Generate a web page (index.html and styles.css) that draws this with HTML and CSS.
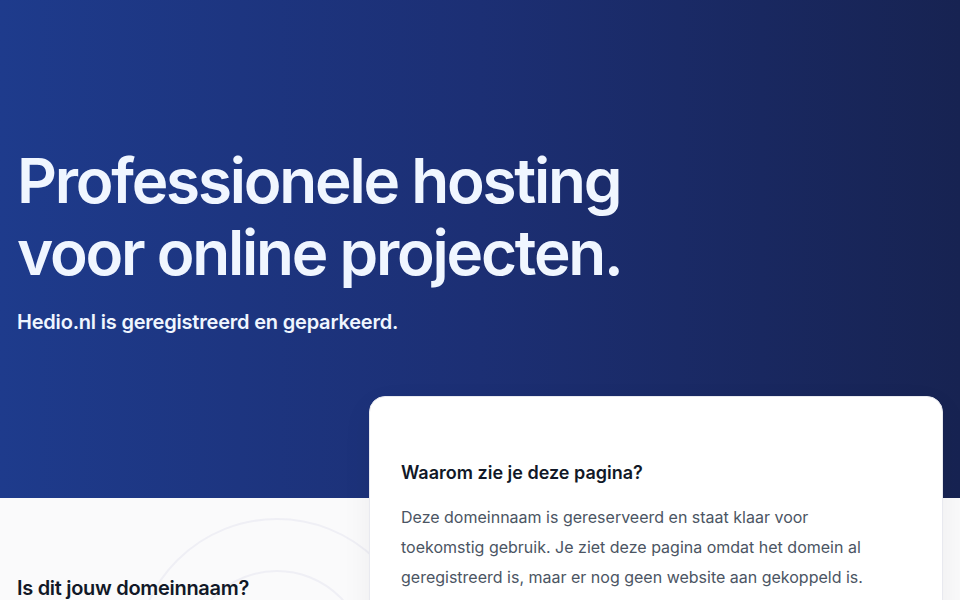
FILE: index.html
```html
<!DOCTYPE html>
<html lang="nl">
<head>
<meta charset="utf-8">
<title>Hedio.nl</title>
<link rel="stylesheet" href="styles.css">
</head>
<body>
<header class="hero">
  <div class="container">
    <h1 class="hero-title">Professionele hosting<br>voor online projecten.</h1>
    <p class="hero-sub">Hedio.nl is geregistreerd en geparkeerd.</p>
  </div>
</header>
<main class="content">
  <div class="rings" aria-hidden="true">
    <span class="ring ring-outer"></span>
    <span class="ring ring-inner"></span>
  </div>
  <div class="container grid">
    <section class="owner">
      <h2 class="owner-title">Is dit jouw domeinnaam?</h2>
    </section>
    <article class="card">
      <h2 class="card-title">Waarom zie je deze pagina?</h2>
      <p class="card-text">Deze domeinnaam is gereserveerd en staat klaar voor toekomstig gebruik. Je ziet deze pagina omdat het domein al geregistreerd is, maar er nog geen website aan gekoppeld is. Een moment van deze situatie is heel gebruikelijk bij nieuwe domeinen.</p>
    </article>
  </div>
</main>
</body>
</html>
```

FILE: styles.css
```css
* { box-sizing: border-box; }
html, body { margin: 0; padding: 0; }
body {
  font-family: Inter, "Noto Sans", sans-serif;
  background: #fafafb;
  color: #111827;
  overflow: hidden;
  height: 600px;
}
.container {
  padding: 0 17px;
}
.hero {
  background: linear-gradient(90deg, #1e3b8c 0%, #1c2f74 50%, #172352 100%);
  padding: 145px 0 161px;
  color: #f0f6ff;
}
.hero-title {
  margin: 0;
  font-size: 62px;
  line-height: 72px;
  font-weight: 600;
  letter-spacing: -0.036em;
}
.hero-sub {
  margin: 18px 0 0;
  font-size: 20px;
  line-height: 30px;
  font-weight: 600;
  letter-spacing: -0.01em;
}
.content {
  position: relative;
}
.rings {
  position: absolute;
  left: 0; top: 0; right: 0; bottom: 0;
  z-index: 0;
}
.ring {
  position: absolute;
  border: 2px solid #efeff5;
  border-radius: 50%;
}
.ring-outer { left: 135px; top: 20px; width: 284px; height: 284px; }
.ring-inner { left: 187px; top: 72px; width: 180px; height: 180px; }
.grid {
  position: relative;
  z-index: 1;
  display: grid;
  grid-template-columns: 1fr 574px;
  gap: 20px;
  align-items: start;
}
.owner {
  padding-top: 76px;
}
.owner-title {
  margin: 0;
  font-size: 20px;
  line-height: 28px;
  font-weight: 600;
  color: #111827;
  letter-spacing: -0.015em;
}
.card {
  margin-top: -102px;
  background: #ffffff;
  border: 1px solid #e8e9ef;
  border-radius: 16px;
  padding: 62px 31px 32px;
  box-shadow: 0 10px 30px rgba(15, 23, 42, 0.06);
}
.card-title {
  margin: 0;
  font-size: 18px;
  line-height: 28px;
  font-weight: 600;
  color: #111827;
}
.card-text {
  margin: 15px 0 0;
  max-width: 470px;
  font-size: 16px;
  line-height: 30px;
  color: #4b5563;
}
```
